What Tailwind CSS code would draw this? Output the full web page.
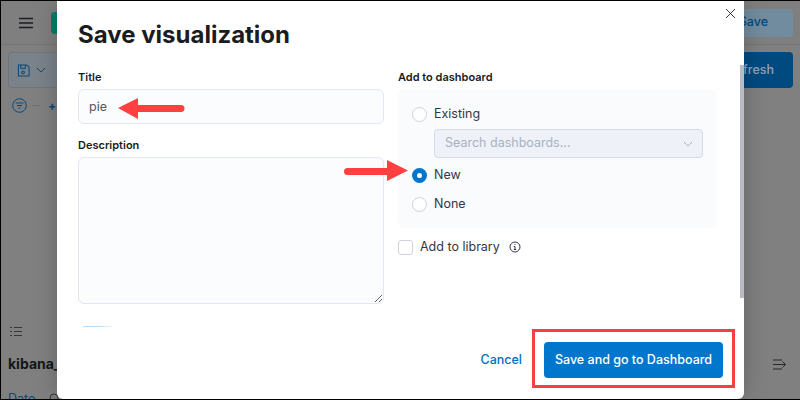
<!DOCTYPE html>
<html lang="en">

<head>
    <meta charset="UTF-8">
    <script src="https://cdn.jsdelivr.net/npm/@tailwindcss/browser@4"></script>
    <title>Save visualization</title>
</head>

<body class="m-0 overflow-hidden bg-black font-['Inter',sans-serif]">
    <div class="relative w-[800px] h-[400px] overflow-hidden bg-[#808080] border-t border-b border-l border-black">
        <!-- page behind the modal -->
        <header class="flex items-center h-[44px] pl-[17px] pr-[7px] bg-[#7f7f7f] border-b border-[#747474]">
            <svg width="16" height="12" viewBox="0 0 16 12" stroke="#1a1c21" stroke-width="1.6">
                <path d="M1 1.500h14M1 6h14M1 10.500h14" />
            </svg>
            <div class="ml-[17px] w-[30px] h-[22px] rounded-[4px] bg-[#00806a]"></div>
            <div class="ml-auto flex items-center justify-end w-[73px] h-[28px] pr-[25px] rounded-[4px] bg-[#728c9f] text-[#00467a] text-[12.5px] font-medium">Save</div>
        </header>
        <div class="flex justify-between pl-[7px] pr-[7px] pt-[7px]">
            <div class="flex items-center gap-[6px] w-[70px] h-[36px] pl-[8px] rounded-[4px] bg-[#7a828a] border border-[#70757c]">
                <svg width="13" height="13" viewBox="0 0 14 14" fill="none" stroke="#0a4a7a" stroke-width="1.100">
                    <path d="M1.500 1h9l2.500 2.500v9.500h-11.500zM4 1v3.500h5v-3.500" />
                    <circle cx="6.500" cy="9" r="1.500" />
                </svg>
                <svg width="10" height="6" viewBox="0 0 12 7" fill="none" stroke="#0a4a7a" stroke-width="1.200">
                    <path d="M1 1l5 5 5-5" />
                </svg>
            </div>
            <div class="flex items-center justify-end w-[80px] h-[36px] pr-[19px] rounded-[4px] bg-[#004a80] text-[#8fa3b5] text-[12.5px] font-medium">Refresh</div>
        </div>
        <div class="flex items-center pl-[11px] pt-[10px] text-[#0a4a7a]">
            <svg width="15" height="15" viewBox="0 0 15 15" fill="none" stroke="#0a4a7a" stroke-width="1">
                <circle cx="7.500" cy="7.500" r="6.800" />
                <path d="M3.500 5h8M5 7.500h5M6.500 10h2" />
            </svg>
            <div class="ml-[5px] w-[8px] h-px bg-[#6f7378]"></div>
            <span class="ml-[8px] text-[12px] font-bold leading-none">+</span>
        </div>
        <svg class="ml-[9px] mt-[213px]" width="12" height="11" viewBox="0 0 12 11" fill="none" stroke="#33373d" stroke-width="1">
            <path d="M0 1.500h2M4 1.500h8M0 5.500h2M4 5.500h8M0 9.500h2M4 9.500h8" />
        </svg>
        <div class="flex items-center justify-between pl-[7px] pr-[13px] mt-[18px] text-[#14161a]">
            <span class="text-[14px] font-bold leading-[18px]">kibana_sample</span>
            <svg width="14" height="11" viewBox="0 0 14 11" fill="none" stroke="#26282c" stroke-width="1">
                <path d="M0 1h9M0 5.500h12M0 10h9M9.500 2.500l3 3-3 3" />
            </svg>
        </div>
        <div class="flex items-start pl-[7px] mt-[17px] text-[12.5px] leading-[18px] text-[#0a4a7a]">
            Date
            <svg class="ml-[14px] mt-[3px]" width="10" height="10" viewBox="0 0 10 10" fill="none" stroke="#2f3338" stroke-width="1">
                <circle cx="5" cy="5" r="4" />
            </svg>
        </div>

        <!-- modal -->
        <div class="absolute left-[56px] top-0 w-[687px] h-[398px] flex flex-col bg-white rounded-b-[6px] shadow-[0_0_24px_rgba(0,0,0,0.22)]">
            <button class="absolute right-[7px] top-[6px] p-0">
                <svg class="block" width="13" height="13" viewBox="0 0 13 13" stroke="#343741" stroke-width="1">
                    <path d="M2 2l9 9M11 2l-9 9" />
                </svg>
            </button>
            <div class="absolute right-0 top-[64px] w-[4px] h-[233px] bg-[#b9bcc4]"></div>

            <h2 class="pl-[21px] pt-[18px] text-[24px] leading-[32px] font-bold text-[#1a1c21]">Save visualization</h2>
            <div class="flex gap-[14px] pl-[21px] mt-[19px]">
                <div class="w-[306px]">
                    <label class="block text-[11px] leading-[14px] font-semibold text-[#1a1c21]">Title</label>
                    <input class="block mt-[5px] w-full h-[35px] px-[10px] text-[12.5px] text-[#54575f] bg-[#fbfcfd] border border-[#e4e7f0] rounded-[6px] outline-none" type="text" value="pie">
                    <label class="block mt-[14px] text-[11px] leading-[14px] font-semibold text-[#1a1c21]">Description</label>
                    <textarea class="block mt-[5px] w-full h-[147px] bg-[#fbfcfd] border border-[#e4e7f0] rounded-[6px] outline-none"></textarea>
                    <div class="mt-[22px] ml-[5px] w-[30px] h-px bg-gradient-to-r from-[#b5dcf7] via-[#b5dcf7] to-[#f3f5f8]"></div>
                </div>
                <div class="w-[319px]">
                    <div class="text-[11px] leading-[14px] font-semibold text-[#1a1c21]">Add to dashboard</div>
                    <div class="mt-[5px] h-[139px] px-[14px] pt-[17px] bg-[#fafbfd] rounded-[6px]">
                        <div class="flex items-center gap-[7px] h-[16px] text-[12.5px] text-[#343741]">
                            <span class="w-[15px] h-[15px] rounded-full bg-white border border-[#cfd2d9]"></span>Existing
                        </div>
                        <div class="flex items-center justify-between mt-[7px] ml-[22px] w-[269px] h-[29px] pl-[10px] pr-[9px] text-[12.5px] text-[#a9b1c0] bg-[#eef1f7] border border-[#d3dcec] rounded-[4px]">
                            Search dashboards...
                            <svg width="10" height="6" viewBox="0 0 10 6" fill="none" stroke="#a9b1c0" stroke-width="1">
                                <path d="M1 1l4 4 4-4" />
                            </svg>
                        </div>
                        <div class="flex items-center gap-[7px] h-[16px] mt-[9px] text-[12.5px] text-[#343741]">
                            <span class="flex items-center justify-center w-[15px] h-[15px] rounded-full bg-[#0077cc]"><span class="w-[5px] h-[5px] rounded-full bg-white"></span></span>New
                        </div>
                        <div class="flex items-center gap-[7px] h-[16px] mt-[13px] text-[12.5px] text-[#343741]">
                            <span class="w-[15px] h-[15px] rounded-full bg-white border border-[#cfd2d9]"></span>None
                        </div>
                    </div>
                    <div class="flex items-center h-[16px] mt-[11px] text-[12.5px] text-[#343741]">
                        <span class="w-[15px] h-[15px] rounded-[3px] bg-white border border-[#cfd2d9]"></span>
                        <span class="ml-[7px]">Add to library</span>
                        <svg class="ml-[9px]" width="12" height="12" viewBox="0 0 12 12" fill="none" stroke="#343741" stroke-width="1">
                            <circle cx="6" cy="6" r="5" />
                            <path d="M4.800 5.500h1.200v3M4.800 8.500h2.400M6 3v1" />
                        </svg>
                    </div>
                </div>
            </div>
            <div class="mt-auto flex items-center justify-end gap-[22px] pr-[21px] pb-[21px]">
                <a class="text-[12.5px] font-medium text-[#0071c2]">Cancel</a>
                <button class="w-[179px] h-[36px] rounded-[4px] bg-[#0077cc] text-white text-[12.5px] font-medium">Save and go to Dashboard</button>
            </div>
        </div>

        <!-- annotations -->
        <svg class="absolute left-[-1px] top-[-1px] pointer-events-none" width="800" height="400" fill="#ff4040">
            <path d="M118 108l20-10v7h43a3.500 3.500 0 0 1 0 7h-43v7z" />
            <path d="M344 171.500a3.500 3.500 0 0 1 3.500-3.500h39.500v-8l21 10.500-21 10.500v-6h-39.500a3.500 3.500 0 0 1-3.500-3.500z" />
        </svg>
        <div class="absolute left-[531px] top-[328px] w-[203px] h-[59px] border-[3px] border-[#f44040]"></div>
    </div>
</body>

</html>
